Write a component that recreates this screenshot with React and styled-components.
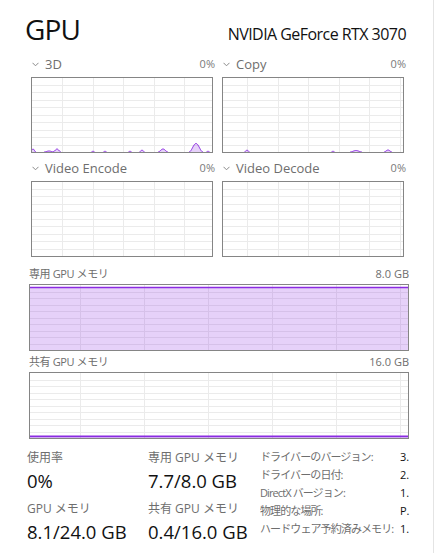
import React from 'react';
import styled, { createGlobalStyle } from 'styled-components';

const GlobalStyle = createGlobalStyle`
  html, body {
    margin: 0;
    padding: 0;
    background: #fff;
  }
  body {
    font-family: "Open Sans", "Noto Sans CJK JP", sans-serif;
    color: #1a1a1a;
  }
`;

const PURPLE = '#8b2be2';
const PURPLE_FILL = 'rgba(139, 44, 226, 0.22)';

const Page = styled.div`
  box-sizing: border-box;
  width: 434px;
  height: 553px;
  border-right: 1px solid #e4e4e4;
  overflow: hidden;
`;

const Header = styled.div`
  display: flex;
  justify-content: space-between;
  align-items: baseline;
  padding: 12px 27px 0 25px;
  height: 41px;
`;

const Title = styled.div`
  font-size: 28px;
  line-height: 34px;
  letter-spacing: -0.8px;
  color: #111;
`;

const Device = styled.div`
  font-size: 16px;
  line-height: 22px;
  letter-spacing: -0.55px;
  color: #111;
`;

const EngineGrid = styled.div`
  display: grid;
  grid-template-columns: 182px 182px;
  column-gap: 9px;
  row-gap: 4px;
  padding-left: 31px;
`;

const Cell = styled.div`
  display: flex;
  flex-direction: column;
`;

const CellHead = styled.div`
  display: flex;
  align-items: center;
  height: 22px;
  margin-right: -2px;
  margin-bottom: 2px;
  color: #6e6e6e;
`;

const CellName = styled.span`
  font-size: 13px;
  line-height: 22px;
  margin-left: 6px;
  flex: 1;
`;

const CellValue = styled.span`
  font-size: 11px;
  line-height: 22px;
  color: #7a7a7a;
`;

const Chevron = styled.svg`
  margin-left: 1px;
  display: block;
`;

const ChartBox = styled.div`
  width: ${p => p.$w}px;
  height: ${p => p.$h}px;
  border: 1px solid #858585;
  background: #fff;
  svg {
    display: block;
  }
`;

const MemorySection = styled.div`
  display: flex;
  flex-direction: column;
  gap: 2px;
  padding-left: 29px;
  margin-top: 8px;
`;

const MemHead = styled.div`
  display: flex;
  justify-content: space-between;
  width: 380px;
  height: 18px;
  margin-bottom: 1px;
  font-size: 11px;
  line-height: 18px;
  color: #6e6e6e;
  overflow: hidden;
`;

const MemName = styled.span`
  letter-spacing: -0.4px;
`;

const Footer = styled.div`
  display: grid;
  grid-template-columns: 121px 112px auto;
  padding-left: 27px;
  margin-top: 10px;
`;

const StatColumn = styled.div`
  display: flex;
  flex-direction: column;
`;

const Stat = styled.div`
  margin-bottom: 4px;
`;

const StatLabel = styled.div`
  height: 17px;
  font-size: 12px;
  line-height: 17px;
  color: #6e6e6e;
  white-space: nowrap;
`;

const StatValue = styled.div`
  height: 30px;
  font-size: 18.5px;
  line-height: 30px;
  color: #111;
  white-space: nowrap;
`;

const InfoList = styled.div`
  display: grid;
  grid-template-columns: 140px auto;
  grid-auto-rows: 18px;
  margin-top: -1px;
  font-size: 11px;
  line-height: 18px;
`;

const InfoKey = styled.div`
  color: #6e6e6e;
  white-space: nowrap;
  letter-spacing: -0.9px;
  overflow: hidden;
`;

const InfoVal = styled.div`
  color: #111;
  white-space: nowrap;
  overflow: hidden;
`;

function ChevronIcon() {
  return (
    <Chevron width="7" height="5" viewBox="0 0 7 5">
      <polyline points="0.5,0.8 3.5,3.8 6.5,0.8" fill="none" stroke="#8a8a8a" strokeWidth="1" />
    </Chevron>
  );
}

function GridLines({ w, h, colStep, colOffset, rowStep, rowOffset, color }) {
  const lines = [];
  for (let x = colOffset; x < w; x += colStep) {
    const px = Math.round(x) + 0.5;
    lines.push(<line key={'v' + x} x1={px} y1={0} x2={px} y2={h} stroke={color} strokeWidth="1" />);
  }
  for (let y = rowOffset; y < h; y += rowStep) {
    const py = Math.round(y) + 0.5;
    lines.push(<line key={'h' + y} x1={0} y1={py} x2={w} y2={py} stroke={color} strokeWidth="1" />);
  }
  return <g>{lines}</g>;
}

// small bumps of activity; each is [center, half width, height]
function bumpPath(h, [c, hw, peak]) {
  const pts = [];
  for (let x = c - hw; x <= c + hw; x += 0.5) {
    const t = (x - c) / hw;
    const y = peak * (0.5 + 0.5 * Math.cos(Math.PI * t));
    pts.push(`${x.toFixed(1)},${(h - y).toFixed(2)}`);
  }
  return pts;
}

function EngineChart({ colOffset, bumps }) {
  const w = 180;
  const h = 74;
  return (
    <ChartBox $w={w} $h={h}>
      <svg width={w} height={h}>
        <GridLines w={w} h={h} colStep={30.6} colOffset={colOffset} rowStep={7.45} rowOffset={7} color="#ebebeb" />
        {bumps.map((b, i) => {
          const pts = bumpPath(h, b);
          return (
            <g key={i}>
              <polygon points={`${pts.join(' ')} ${b[0] + b[1]},${h} ${b[0] - b[1]},${h}`} fill={PURPLE_FILL} />
              <polyline points={pts.join(' ')} fill="none" stroke={PURPLE} strokeWidth="1" />
            </g>
          );
        })}
      </svg>
    </ChartBox>
  );
}

function MemoryChart({ level }) {
  const w = 378;
  const h = 65;
  const top = Math.max(1, (1 - level) * h);
  return (
    <ChartBox $w={w} $h={h}>
      <svg width={w} height={h}>
        <GridLines w={w} h={h} colStep={64} colOffset={50} rowStep={6.45} rowOffset={7} color="#ebebeb" />
        <rect x="0" y={top} width={w} height={h - top} fill={PURPLE_FILL} />
        <line x1="0" y1={top} x2={w} y2={top} stroke={PURPLE} strokeWidth="1.6" />
      </svg>
    </ChartBox>
  );
}

const engines = [
  {
    name: '3D',
    offset: 30,
    bumps: [[1, 3, 3], [17, 5, 1], [25, 4, 3], [61, 1.5, 1], [73, 1.5, 1], [98, 1.5, 1], [110, 2.5, 2], [131, 5, 3], [164, 7, 8.5], [176, 1.5, 1]],
  },
  {
    name: 'Copy',
    offset: 24,
    bumps: [[24, 2.5, 2], [110, 1.5, 1], [133, 6, 1.5], [165, 4, 2]],
  },
  { name: 'Video Encode', offset: 30, bumps: [] },
  { name: 'Video Decode', offset: 24, bumps: [] },
];

const info = [
  ['ドライバーのバージョン:', '3.'],
  ['ドライバーの日付:', '2.'],
  ['DirectX バージョン:', '1.'],
  ['物理的な場所:', 'P.'],
  ['ハードウェア予約済みメモリ:', '1.'],
];

export default function App() {
  return (
    <Page>
      <GlobalStyle />
      <Header>
        <Title>GPU</Title>
        <Device>NVIDIA GeForce RTX 3070</Device>
      </Header>

      <EngineGrid>
        {engines.map(e => (
          <Cell key={e.name}>
            <CellHead>
              <ChevronIcon />
              <CellName>{e.name}</CellName>
              <CellValue>0%</CellValue>
            </CellHead>
            <EngineChart colOffset={e.offset} bumps={e.bumps} />
          </Cell>
        ))}
      </EngineGrid>

      <MemorySection>
        <div>
          <MemHead>
            <MemName>専用 GPU メモリ</MemName>
            <span>8.0 GB</span>
          </MemHead>
          <MemoryChart level={7.7 / 8} />
        </div>
        <div>
          <MemHead>
            <MemName>共有 GPU メモリ</MemName>
            <span>16.0 GB</span>
          </MemHead>
          <MemoryChart level={0.4 / 16} />
        </div>
      </MemorySection>

      <Footer>
        <StatColumn>
          <Stat>
            <StatLabel>使用率</StatLabel>
            <StatValue>0%</StatValue>
          </Stat>
          <Stat>
            <StatLabel>GPU メモリ</StatLabel>
            <StatValue>8.1/24.0 GB</StatValue>
          </Stat>
        </StatColumn>
        <StatColumn>
          <Stat>
            <StatLabel>専用 GPU メモリ</StatLabel>
            <StatValue>7.7/8.0 GB</StatValue>
          </Stat>
          <Stat>
            <StatLabel>共有 GPU メモリ</StatLabel>
            <StatValue>0.4/16.0 GB</StatValue>
          </Stat>
        </StatColumn>
        <InfoList>
          {info.map(([k, v]) => (
            <React.Fragment key={k}>
              <InfoKey>{k}</InfoKey>
              <InfoVal>{v}</InfoVal>
            </React.Fragment>
          ))}
        </InfoList>
      </Footer>
    </Page>
  );
}
